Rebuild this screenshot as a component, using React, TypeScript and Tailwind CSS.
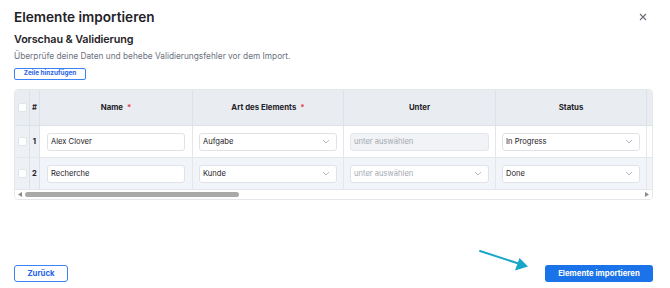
import React from "react";

type Col = { label: string; req?: boolean; w: number };

const cols: Col[] = [
  { label: "Name", req: true, w: 153 },
  { label: "Art des Elements", req: true, w: 151 },
  { label: "Unter", w: 152 },
  { label: "Status", w: 151 },
  { label: "", w: 151 },
];

function Chevron() {
  return (
    <svg width="8" height="5" viewBox="0 0 8 5" className="shrink-0">
      <path d="M1 1l3 3 3-3" fill="none" stroke="#aab1ba" strokeWidth="0.9" />
    </svg>
  );
}

function TextBox({ value }: { value: string }) {
  return (
    <div className="h-[18px] w-full rounded-[3px] border border-[#dfe3e8] bg-white px-[3px] flex items-center text-[7.6px] text-[#1f2328]">
      {value}
    </div>
  );
}

function SelectBox({ value, placeholder, disabled }: { value?: string; placeholder?: string; disabled?: boolean }) {
  return (
    <div
      className={
        disabled
          ? "h-[18px] w-full rounded-[3px] border border-[#e3e7ec] bg-[#f1f3f6] px-[3px] flex items-center text-[7.6px] text-[#a3a9b1]"
          : "h-[18px] w-full rounded-[3px] border border-[#dfe3e8] bg-white px-[3px] pr-[6px] flex items-center justify-between text-[7.6px]"
      }
    >
      <span className={value ? "text-[#1f2328]" : "text-[#a3a9b1]"}>{value ?? placeholder}</span>
      {!disabled && <Chevron />}
    </div>
  );
}

function Check() {
  return <div className="w-[9px] h-[9px] rounded-[2px] bg-white border border-[#e1e5ea]" />;
}

const rows = [
  { n: 1, name: "Alex Clover", art: "Aufgabe", unterDisabled: true, status: "In Progress", bg: "bg-white" },
  { n: 2, name: "Recherche", art: "Kunde", unterDisabled: false, status: "Done", bg: "bg-[#f1f4f8]" },
];

export default function App() {
  return (
    <div className="relative w-[670px] h-[288px] bg-white flex flex-col pl-[14px] pr-[17px] font-['Inter',sans-serif] text-[#1f2328] overflow-hidden">
      <div className="flex items-center justify-between pt-[7px] h-[27px]">
        <div className="text-[13.6px] font-semibold leading-[20px]">Elemente importieren</div>
        <svg width="8" height="8" viewBox="0 0 8 8" className="mr-[6px]">
          <path d="M1 1l6 6M7 1L1 7" stroke="#6b7078" strokeWidth="1.2" />
        </svg>
      </div>
      <div className="mt-[6px] h-[14px] text-[10.8px] font-semibold leading-[14px] tracking-[-0.1px]">
        Vorschau &amp; Validierung
      </div>
      <div className="mt-[4px] h-[11px] text-[8.3px] leading-[11px] text-[#6b7280]">
        Überprüfe deine Daten und behebe Validierungsfehler vor dem Import.
      </div>
      <div className="mt-[6px] w-[72px] h-[12px] rounded-[2px] border border-[#3b82f6] flex items-center justify-center text-[6.4px] font-bold text-[#2563eb]">
        Zeile hinzufügen
      </div>

      <div className="mt-[9px] w-[639px] rounded-[4px] border border-[#e3e7ec] overflow-hidden">
        <div className="overflow-hidden">
          <div className="flex h-[36px] bg-[#e9edf2] border-b border-[#dde2e8]">
            <div className="w-[15px] shrink-0 flex items-center justify-center border-r border-[#dde2e8]">
              <Check />
            </div>
            <div className="w-[10px] shrink-0 flex items-center justify-center border-r border-[#dde2e8] text-[7.6px] font-bold">
              #
            </div>
            {cols.map((c, i) => (
              <div
                key={i}
                style={{ width: c.w }}
                className="shrink-0 flex items-center justify-center border-r border-[#dde2e8] text-[7.8px] font-bold"
              >
                {c.label}
                {c.req && <span className="ml-[4px] text-[#e5484d]">*</span>}
              </div>
            ))}
          </div>
          {rows.map((r) => (
            <div key={r.n} className={`flex h-[32px] border-b border-[#e3e7ec] ${r.bg}`}>
              <div className="w-[15px] shrink-0 flex items-center justify-center border-r border-[#dde2e8] bg-[#edf0f4]">
                <Check />
              </div>
              <div className="w-[10px] shrink-0 flex items-center justify-center border-r border-[#dde2e8] bg-[#edf0f4] text-[7.6px] font-bold">
                {r.n}
              </div>
              <div style={{ width: 153 }} className="shrink-0 flex items-center px-[7px] border-r border-[#e3e7ec]">
                <TextBox value={r.name} />
              </div>
              <div style={{ width: 151 }} className="shrink-0 flex items-center px-[6px] border-r border-[#e3e7ec]">
                <SelectBox value={r.art} />
              </div>
              <div style={{ width: 152 }} className="shrink-0 flex items-center px-[6px] border-r border-[#e3e7ec]">
                <SelectBox placeholder="unter auswählen" disabled={r.unterDisabled} />
              </div>
              <div style={{ width: 151 }} className="shrink-0 flex items-center px-[6px] border-r border-[#e3e7ec]">
                <SelectBox value={r.status} />
              </div>
              <div style={{ width: 151 }} className="shrink-0 flex items-center px-[6px]" />
            </div>
          ))}
        </div>
        <div className="h-[9px] bg-white flex items-center px-[3px] gap-[3px]">
          <svg width="4" height="5" viewBox="0 0 4 5">
            <path d="M4 0v5L0 2.5z" fill="#8a8a8a" />
          </svg>
          <div className="w-[214px] h-[5px] rounded-full bg-[#a9a9a9]" />
          <div className="flex-1" />
          <svg width="4" height="5" viewBox="0 0 4 5">
            <path d="M0 0v5l4-2.5z" fill="#8a8a8a" />
          </svg>
        </div>
      </div>

      <div className="mt-auto pb-[6px] flex items-center justify-between">
        <div className="w-[54px] h-[17px] rounded-[3px] border border-[#3b82f6] flex items-center justify-center text-[7.8px] font-bold text-[#2563eb]">
          Zurück
        </div>
        <div className="w-[108px] h-[17px] rounded-[3px] bg-[#1a73e8] flex items-center justify-center text-[7.8px] font-bold text-white">
          Elemente importieren
        </div>
      </div>

      <svg className="absolute left-[476px] top-[246px]" width="56" height="26" viewBox="0 0 56 26">
        <path d="M4 5L44 18" stroke="#19a7c9" strokeWidth="2" strokeLinecap="round" />
        <path d="M52 20.5L39 24.5L43.5 12z" fill="#19a7c9" />
      </svg>
    </div>
  );
}
